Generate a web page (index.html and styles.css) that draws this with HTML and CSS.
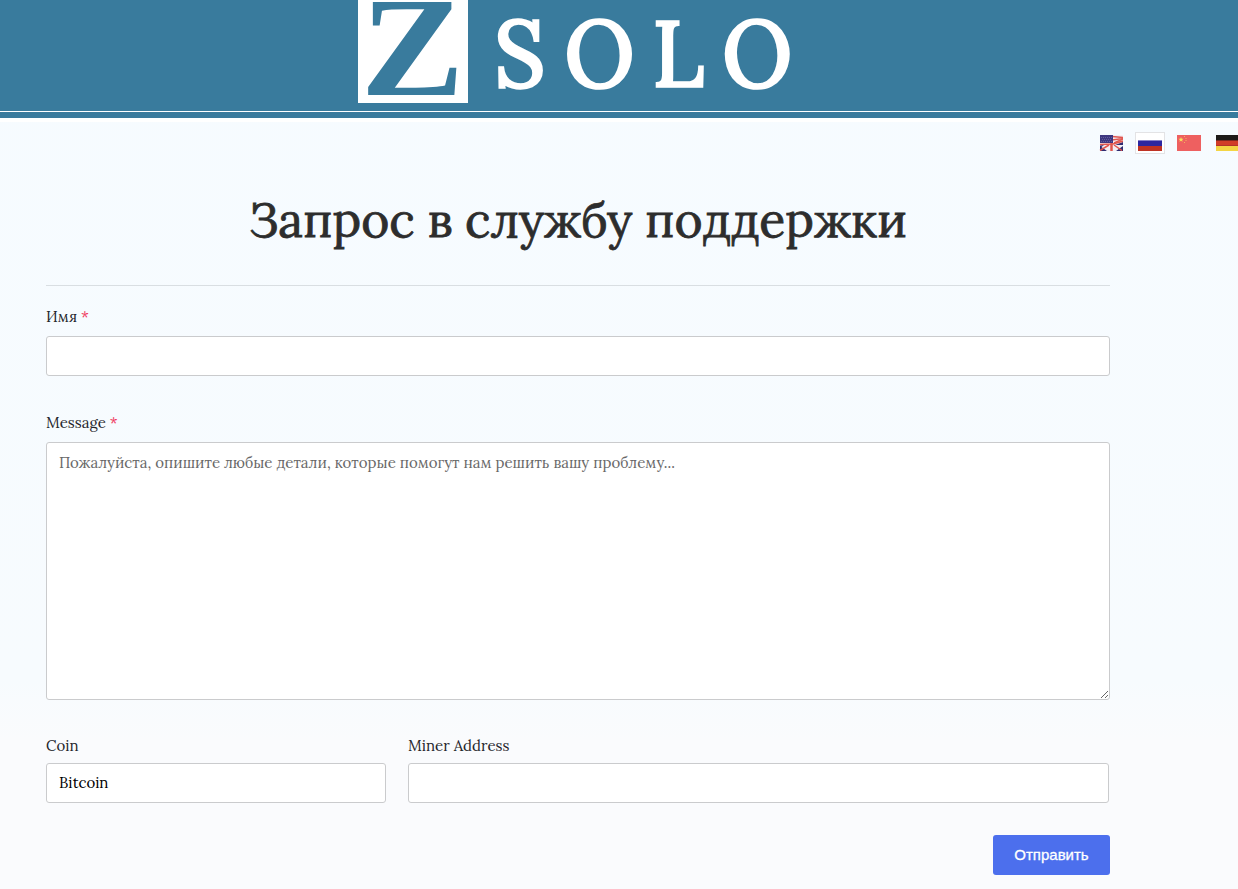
FILE: index.html
```html
<!DOCTYPE html>
<html lang="ru">
<head>
  <meta charset="UTF-8">
  <meta name="viewport" content="width=device-width, initial-scale=1.0">
  <title>Запрос в службу поддержки</title>
  <link rel="stylesheet" href="styles.css">
</head>
<body>
  <header class="header">
    <div class="header-main">
      <svg class="logo" width="440" height="103" viewBox="0 0 440 103" role="img" aria-label="Z SOLO">
        <rect width="110" height="103" fill="#fff"/>
        <text class="logo-mark" transform="scale(1.1 1)" x="2.600" y="95">Z</text>
        <text class="logo-name" transform="scale(0.96 1)" x="141.500 214.500 306 379" y="87">SOLO</text>
      </svg>
    </div>
    <div class="header-strip"></div>
  </header>

  <nav class="languages">
    <a class="lang" href="#" title="English">
      <svg width="24" height="16" viewBox="0 0 24 16">
        <rect x="1" width="23" height="16" fill="#f3eef4"/>
        <path d="M1 11V16H8ZM24 11V16H17Z" fill="#2f2b70"/>
        <path d="M1 10.500L5 10L1 13ZM16 10L24 7V10Z" fill="#2f2b70"/>
        <path d="M1 15.500L10 10M23 15.500L15 10M15 8L24 4" stroke="#e0564f" stroke-width="1.500"/>
        <path d="M12.500 8V16" stroke="#e0564f" stroke-width="2.500"/>
        <path d="M13 1.500L24 2.500M13 5L24 3.500M1 9.500L14 9L24 6" stroke="#e0564f" stroke-width="1.700" fill="none"/>
        <rect x="1" width="13" height="8" fill="#3d3780"/>
        <path d="M2 2.500H13M3 4.500H13M2 6.500H13" stroke="#625c9b" stroke-dasharray="1 1"/>
      </svg>
    </a>
    <a class="lang active" href="#" title="Русский">
      <svg width="24" height="16" viewBox="0 0 24 16">
        <rect width="24" height="16" fill="#fff"/>
        <rect y="5" width="24" height="6" fill="#2c27a0"/>
        <rect y="5" width="24" height="1" fill="#8581cb"/>
        <rect y="11" width="24" height="5" fill="#bf3324"/>
      </svg>
    </a>
    <a class="lang" href="#" title="中文">
      <svg width="24" height="16" viewBox="0 0 24 16">
        <rect width="24" height="16" fill="#ee6060"/>
        <path d="M4 2L4.700 3.800H6.500L5.100 5L5.600 6.800L4 5.700L2.400 6.800L2.900 5L1.500 3.800H3.300Z" fill="#f8e45c"/>
        <path d="M7 1.500h1M8.500 3.500h1M8.500 5.500h1M7 7.500h1" stroke="#f4b05c"/>
      </svg>
    </a>
    <a class="lang" href="#" title="Deutsch">
      <svg width="24" height="16" viewBox="0 0 24 16">
        <rect width="24" height="5" fill="#1d1a18"/>
        <rect y="5" width="24" height="6" fill="#d13d28"/>
        <rect y="5" width="24" height="1" fill="#80291f"/>
        <rect y="10" width="24" height="6" fill="#f4d544"/>
        <rect y="10" width="24" height="1" fill="#b3342a"/>
      </svg>
    </a>
  </nav>

  <main class="container">
    <h1>Запрос в службу поддержки</h1>

    <form class="support-form">
      <div class="form-group name-group">
        <label for="name">Имя <span class="required">*</span></label>
        <input type="text" id="name" required>
      </div>
      <div class="form-group message-group">
        <label for="message">Message <span class="required">*</span></label>
        <textarea id="message" placeholder="Пожалуйста, опишите любые детали, которые помогут нам решить вашу проблему..." required></textarea>
      </div>
      <div class="form-row">
        <div class="form-group coin-group">
          <label for="coin">Coin</label>
          <input type="text" id="coin" value="Bitcoin">
        </div>
        <div class="form-group address-group">
          <label for="address">Miner Address</label>
          <input type="text" id="address">
        </div>
      </div>
      <div class="form-actions">
        <button type="submit">Отправить</button>
      </div>
    </form>
  </main>
</body>
</html>
```
FILE: styles.css
```css
* {
  box-sizing: border-box;
}

body {
  margin: 0;
  height: 889px;
  overflow: hidden;
  font-family: Lora, "Liberation Serif", serif;
  color: #25262c;
  background: linear-gradient(#f6fbff, #f7fbfe 680px, #fafbfd 740px);
}

.header {
  border-bottom: 4px solid #fff;
}

.header-main {
  width: 100%;
  height: 111px;
  padding-right: 82px;
  display: flex;
  justify-content: center;
  align-items: flex-start;
  background: #397b9d;
}

.header-strip {
  height: 7px;
  border-top: 1px solid #fff;
  background: #397b9d;
}

.logo {
  display: block;
  overflow: visible;
}

.logo-mark {
  font-family: "Liberation Serif", serif;
  font-size: 141px;
  font-weight: bold;
  fill: #397b9d;
}

.logo-name {
  font-size: 94px;
  font-weight: 500;
  fill: #fff;
  stroke: #fff;
  stroke-width: 1.6px;
}

.languages {
  display: flex;
  gap: 9px;
  width: 160px;
  height: 22px;
  margin: 10px 0 0 1096px;
}

.lang {
  flex: none;
  width: 30px;
  height: 22px;
  padding: 2px;
  border: 1px solid transparent;
}

.lang svg {
  display: block;
}

.lang.active {
  background: #fff;
  border-color: #e3e3e5;
}

.container {
  width: 1064px;
  margin-left: 46px;
}

h1 {
  height: 132px;
  margin: 0;
  padding-top: 36px;
  border-bottom: 1px solid #d9dee2;
  font-size: 48px;
  font-weight: normal;
  line-height: 60px;
  text-align: center;
  white-space: nowrap;
  color: #2d2d2d;
  -webkit-text-stroke: 0.8px #2d2d2d;
}

.form-group {
  display: flex;
  flex-direction: column;
}

.name-group {
  padding-top: 20px;
}

.message-group {
  padding-top: 36px;
}

label {
  height: 30px;
  font-size: 15px;
  line-height: 22px;
}

.required {
  color: #f0365c;
}

input,
textarea {
  width: 100%;
  height: 40px;
  padding: 0 12px 2px;
  border: 1px solid #cacbcd;
  border-radius: 3px;
  background: #fff;
  color: #000;
  font-family: inherit;
  font-size: 15px;
}

textarea {
  display: block;
  height: 258px;
  padding: 9px 12px;
  line-height: 22px;
  resize: vertical;
}

textarea::placeholder {
  color: #686868;
}

.form-row {
  display: flex;
  gap: 22px;
  padding: 35px 1px 0 0;
}

.form-row label {
  height: 28px;
}

.coin-group {
  width: 340px;
}

.address-group {
  flex: 1;
}

.form-actions {
  display: flex;
  justify-content: flex-end;
  margin-top: 32px;
}

button {
  width: 117px;
  height: 40px;
  padding: 0 0 2px;
  border: none;
  border-radius: 3px;
  background: #4c6fed;
  color: #fff;
  font-family: "Liberation Sans", Arial, sans-serif;
  font-size: 15px;
  -webkit-text-stroke: 0.3px #fff;
  cursor: pointer;
}
```
